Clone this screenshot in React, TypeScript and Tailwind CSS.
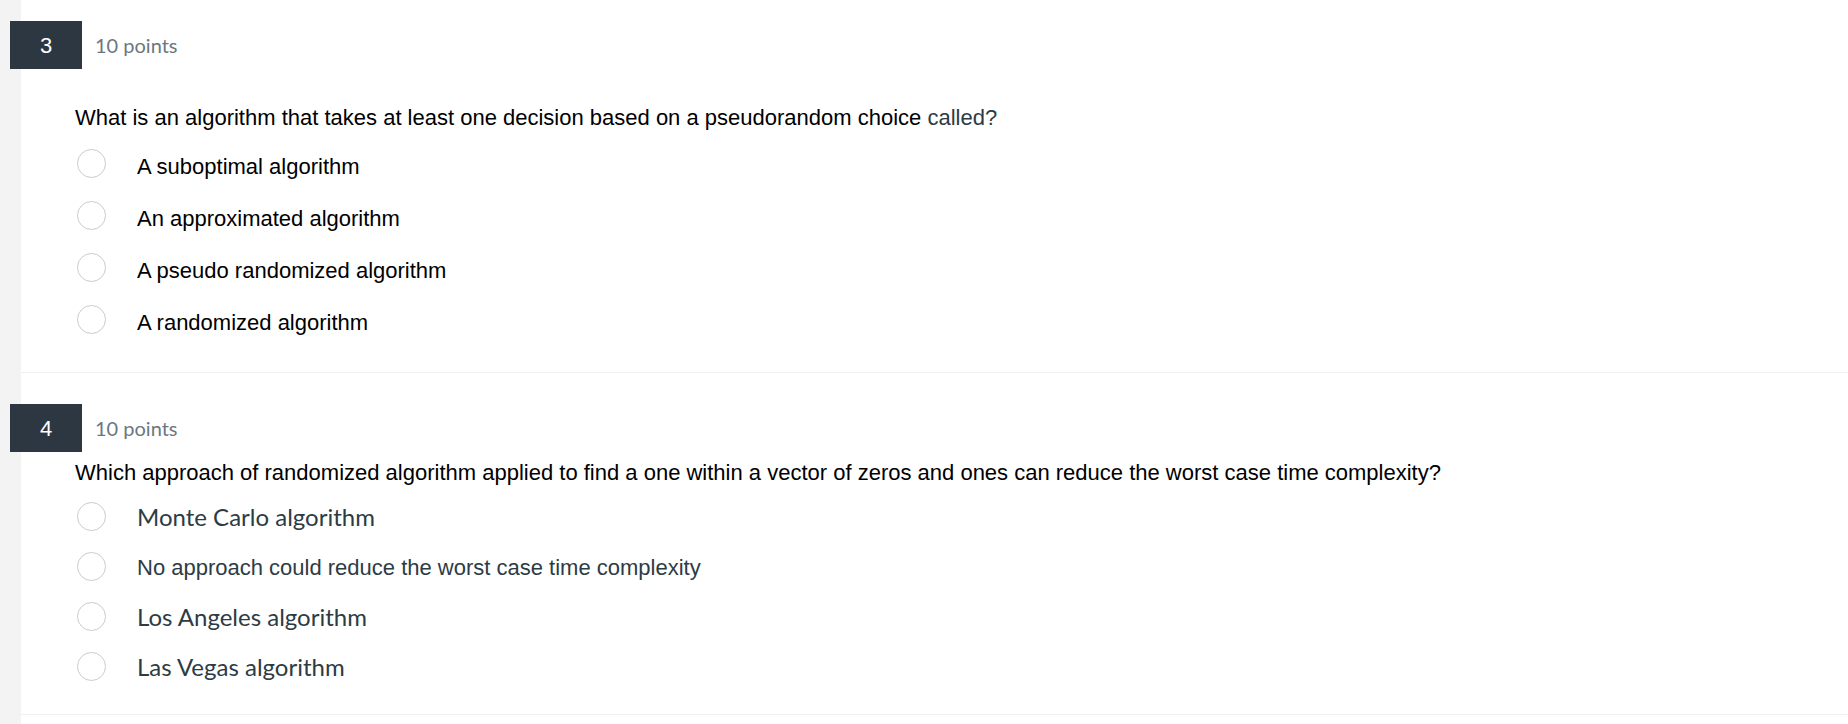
import React from "react";

type Option = { label: string; font?: "lato" | "arial"; tone?: "black" | "slate" };

type Q = {
  num: number;
  points: string;
  text: React.ReactNode;
  options: Option[];
  pad: string;
  gap: string;
  row: string;
  nudge: string;
};

const questions: Q[] = [
  {
    num: 3,
    points: "10 points",
    text: (
      <>
        What is an algorithm that takes at least one decision based on a pseudorandom choice{" "}
        <span className="text-[#2d3b45]">called?</span>
      </>
    ),
    options: [
      { label: "A suboptimal algorithm" },
      { label: "An approximated algorithm" },
      { label: "A pseudo randomized algorithm" },
      { label: "A randomized algorithm" },
    ],
    pad: "pt-[21px] pb-[27px]",
    gap: "mt-[36px] mb-[6px]",
    row: "h-[52px]",
    nudge: "pt-[6px]",
  },
  {
    num: 4,
    points: "10 points",
    text: "Which approach of randomized algorithm applied to find a one within a vector of zeros and ones can reduce the worst case time complexity?",
    options: [
      { label: "Monte Carlo algorithm", font: "lato", tone: "slate" },
      { label: "No approach could reduce the worst case time complexity", font: "arial", tone: "slate" },
      { label: "Los Angeles algorithm", font: "lato", tone: "slate" },
      { label: "Las Vegas algorithm", font: "lato", tone: "slate" },
    ],
    pad: "pt-[31px] pb-[23px]",
    gap: "mt-[8px] mb-[5px]",
    row: "h-[50px]",
    nudge: "pt-[2px]",
  },
];

function Radio() {
  return <span className="h-[29px] w-[29px] shrink-0 rounded-full border border-[#c7cdd1] bg-white" />;
}

function Question({ q }: { q: Q }) {
  return (
    <section className={`border-b border-[#eef0f1] ${q.pad}`}>
      <div className="-ml-[11px] flex items-center">
        <div className="flex h-[48px] w-[72px] items-center justify-center bg-[#2d3741] font-['Liberation_Sans',Arial,sans-serif] text-[22px] text-white">
          {q.num}
        </div>
        <span className="ml-[13px] font-['Lato',sans-serif] text-[20px] text-[#6b7780]">{q.points}</span>
      </div>
      <p className={`ml-[54px] font-['Liberation_Sans',Arial,sans-serif] text-[22px] leading-[26px] text-black ${q.gap}`}>
        {q.text}
      </p>
      <ul className="ml-[56px]">
        {q.options.map((o) => (
          <li key={o.label} className={`flex items-center ${q.row}`}>
            <Radio />
            <span
              className={
                `ml-[31px] ${q.nudge} ` +
                (o.font === "lato"
                  ? "font-['Lato',sans-serif] text-[24px] "
                  : "font-['Liberation_Sans',Arial,sans-serif] text-[22px] ") +
                (o.tone === "slate" ? "text-[#2d3b45]" : "text-black")
              }
            >
              {o.label}
            </span>
          </li>
        ))}
      </ul>
    </section>
  );
}

export default function App() {
  return (
    <div className="flex min-h-screen bg-white">
      <div className="w-[21px] shrink-0 bg-[#f3f3f3]" />
      <main className="flex-1">
        {questions.map((q) => (
          <Question key={q.num} q={q} />
        ))}
      </main>
    </div>
  );
}
